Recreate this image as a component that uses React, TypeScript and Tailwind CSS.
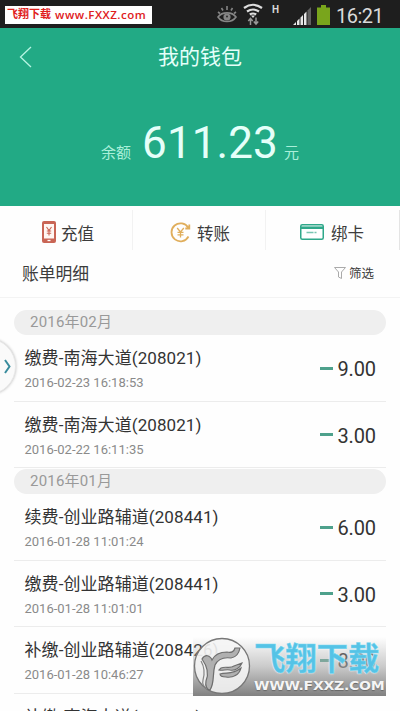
import React from "react";

type Bill = { title: string; time: string; amount: string };

const february: Bill[] = [
  { title: "缴费-南海大道(208021)", time: "2016-02-23 16:18:53", amount: "9.00" },
  { title: "缴费-南海大道(208021)", time: "2016-02-22 16:11:35", amount: "3.00" },
];

const january: Bill[] = [
  { title: "续费-创业路辅道(208441)", time: "2016-01-28 11:01:24", amount: "6.00" },
  { title: "缴费-创业路辅道(208441)", time: "2016-01-28 11:01:01", amount: "3.00" },
  { title: "补缴-创业路辅道(208426)", time: "2016-01-28 10:46:27", amount: "8.00" },
];

const lastTitle = "补缴-南海大道(208026)";

function StatusBar() {
  return (
    <div className="flex h-7 shrink-0 items-center justify-between bg-[#1e1e1e] pl-[5px] pr-[17px]">
      <div className="mt-[2px] flex h-[18px] w-[147px] items-center gap-[4px] bg-white pl-[2px] whitespace-nowrap text-[#e0201c]">
        <span className="text-[11px] leading-[18px] font-bold">飞翔下载</span>
        <span className="font-['Open_Sans'] text-[11.5px] leading-[18px] font-semibold tracking-[0.5px]">www.FXXZ.com</span>
      </div>
      <div className="flex h-7 items-start">
        <svg className="mt-[5px] h-[19px] w-[20px]" viewBox="0 0 20 19" fill="none" stroke="#858585" strokeWidth="1.6">
          <path d="M1 12C5 6.500 15 6.500 19 12C15 18 5 18 1 12Z" />
          <circle cx="10" cy="12" r="2.800" fill="#858585" />
          <path d="M10 1v4M4.500 3l1.500 2.500M15.500 3l-1.500 2.500M1 7l2 1.500M19 7l-2 1.500" />
          <circle cx="10" cy="11.500" r="0.900" fill="#222" stroke="none" />
        </svg>
        <svg className="mt-[3px] ml-[6px] h-[23px] w-[20px]" viewBox="0 0 20 23" fill="none" stroke="#dedede" strokeWidth="2.200">
          <path d="M1 5Q10 -1.500 19 5M4 8.500Q10 4.500 16 8.500M6.800 11.500Q10 9.500 13.200 11.500" />
          <path d="M8 12.500h4l-2 2.500z" fill="#dedede" stroke="none" />
          <path d="M7.500 22v-6M5.300 18L7.500 15.500L9.700 18M13 14.500v6M10.800 18.500L13 21L15.200 18.500" stroke="#999" strokeWidth="1.500" />
        </svg>
        <span className="mt-[3px] ml-[9px] w-[8px] text-[10px] leading-[13px] font-bold text-[#d8d8d8]">H</span>
        <svg className="mt-[6px] ml-[13px] h-[19px] w-[18px]" viewBox="0 0 18 19">
          <path d="M0 19L3 16V19Z M4 15L6.500 12.500V19H4Z M7.500 11.500L10 9V19H7.500Z M11 8L13.500 5.500V19H11Z" fill="#e6e6e6" />
          <path d="M14.500 4.500L18 1V19H14.500Z" fill="#606060" />
        </svg>
        <svg className="mt-[5px] ml-[6px] h-[20px] w-[13px]" viewBox="0 0 13 20">
          <path d="M4 0h5v2.500h4V20H0V2.500h4Z" fill="#79a51c" />
        </svg>
        <span className="mt-[4px] ml-[6px] w-[47px] text-[20px] leading-[24px] tracking-[-0.5px] whitespace-nowrap text-[#dadada]">16:21</span>
      </div>
    </div>
  );
}

function PhoneIcon() {
  return (
    <svg className="h-[22px] w-[14px]" viewBox="0 0 14 22">
      <rect width="14" height="22" rx="2" fill="#c96555" />
      <rect x="2" y="3" width="10" height="14.500" fill="#fff6f2" />
      <path d="M4.500 6L7 9.500L9.500 6M7 9.500V14.500M4.800 10h4.400M4.800 12.200h4.400" fill="none" stroke="#c96555" strokeWidth="1.100" />
      <path d="M5.500 19.500h3" stroke="#fff" strokeWidth="1.300" />
    </svg>
  );
}

function TransferIcon() {
  return (
    <svg className="h-[21px] w-[21px]" viewBox="0 0 21 21" fill="none" stroke="#e0ae5c" strokeWidth="1.800">
      <path d="M18.300 5.800A9 9 0 1 0 18.500 14.500M19.300 2.500V6.500H15.300" />
      <path d="M7.200 6L10.500 10L13.800 6M10.500 10V15.500M7.500 10.300h6M7.500 12.800h6" strokeWidth="1.300" />
    </svg>
  );
}

function CardIcon() {
  return (
    <svg className="h-[16px] w-[24px]" viewBox="0 0 24 16">
      <rect x="0.750" y="0.750" width="22.500" height="14.500" rx="1.500" fill="#fff" stroke="#2fa88a" strokeWidth="1.500" />
      <path d="M1 3.700h22" stroke="#2fa88a" strokeWidth="2.600" />
      <path d="M6.500 8.500h11" stroke="#79c5b2" strokeWidth="1.300" strokeDasharray="7 1 2 1" />
    </svg>
  );
}

function MonthPill({ children }: { children: React.ReactNode }) {
  return (
    <div className="h-[25px] rounded-full bg-[#efefef] pl-[16px] text-[15px] leading-[25px] tracking-[0.2px] text-[#999]">
      {children}
    </div>
  );
}

function BillRow({ bill }: { bill: Bill }) {
  return (
    <div className="flex h-[66.500px] shrink-0 items-start justify-between border-b border-[#ececec] pr-[10px] pl-[10.500px] whitespace-nowrap">
      <div className="pt-[12px]">
        <div className="text-[17px] leading-[22px] tracking-[0.080px] text-[#333]">{bill.title}</div>
        <div className="mt-[6px] text-[13px] leading-[16px] text-[#8a8a8a]">{bill.time}</div>
      </div>
      <div className="flex items-center pt-[22px]">
        <span className="mr-[4px] mb-[2px] h-[3px] w-[13px] bg-[#4ea18c]" />
        <span className="text-[20px] leading-[24px] tracking-[-0.1px] text-[#333]">{bill.amount}</span>
      </div>
    </div>
  );
}

function Watermark() {
  return (
    <div className="absolute top-[637px] left-[193px] flex h-[59px] w-[193px] bg-linear-to-b from-[#d0d0d000] via-[#acacaca0] to-[#7c7c7cf5]">
      <svg className="h-[59px] w-[58px] shrink-0" viewBox="0 0 58 59">
        <circle cx="29" cy="29" r="27.500" fill="#f5f5f5" fillOpacity="0.880" stroke="#777" strokeWidth="1.300" />
        <path d="M9 22C12 17 17 18 19 23C22 17 27 15 34 15C38 16 41 15 42 11L47 11C46 16 44 20 38 21C31 20 25 22 22 28C19 38 22 45 17 53C14 53 12 49 13 44C16 37 14 29 9 22Z" fill="#b0b0b0" stroke="#6e6e6e" strokeWidth="1.200" />
        <path d="M8 24C12 31 12 36 10 43C9 47 11 50 14 52" fill="none" stroke="#858585" strokeWidth="1.200" />
        <path d="M28 31C33 29 37 32 41 29L49 26C47 31 42 34 37 33C33 32 30 34 26 33ZM27 37C34 35 39 38 48 31C46 38 40 41 33 40C29 40 27 39 27 37Z" fill="#b0b0b0" stroke="#6e6e6e" strokeWidth="1.100" />
      </svg>
      <div className="flex w-[134px] flex-col pl-[3px] whitespace-nowrap">
        <div className="mt-[4px] h-[37px] text-[31.500px] leading-[37px] font-bold tracking-[-0.2px] text-[#55c3e6] [-webkit-text-stroke:0.5px_#7ad6ef] [text-shadow:0_0_1px_#fff,0_0_2px_#fff]">飞翔下载</div>
        <div className="h-[16px] origin-left scale-x-[1.080] font-['DejaVu_Sans'] text-[13px] leading-[16px] font-bold tracking-[-0.25px] text-[#f5f5f5] [text-shadow:0_1px_1px_#666]">WWW.FXXZ.COM</div>
      </div>
    </div>
  );
}

export default function App() {
  return (
    <div className="relative flex h-[711px] w-[400px] flex-col overflow-hidden bg-[#fefefe] font-[Roboto,'Noto_Sans_CJK_SC',sans-serif]">
      <StatusBar />
      <header className="h-[178px] shrink-0 bg-[#22aa85] text-[#e5fff9]">
        <div className="grid h-[57px] grid-cols-[40px_1fr_40px] items-center">
          <svg className="ml-[19px] h-[22px] w-[14px]" viewBox="0 0 14 22" fill="none" stroke="#b7f5e3" strokeWidth="1.300">
            <path d="M12 1L1.500 11L12 21" />
          </svg>
          <h1 className="text-center text-[21px] leading-[30px]">我的钱包</h1>
        </div>
        <div className="flex items-baseline justify-center pt-[32px] whitespace-nowrap">
          <span className="text-[15px] text-[#a9efd9]">余额</span>
          <span className="mr-[6px] ml-[11px] text-[44px] leading-[52px] tracking-[0.100px]">611.23</span>
          <span className="text-[15px] text-[#a9efd9]">元</span>
        </div>
      </header>
      <nav className="mt-[4px] flex h-[40px] shrink-0 text-[16.500px] text-[#3c3c3c]">
        <button className="flex w-[133px] items-center gap-[5px] border-r border-[#f2f2f2] pt-[4px] pl-[42px]">
          <PhoneIcon /><span className="pt-[6px]">充值</span>
        </button>
        <button className="flex w-[133px] items-center gap-[6px] border-r border-[#f2f2f2] pt-[4px] pl-[37px]">
          <TransferIcon /><span className="pt-[6px]">转账</span>
        </button>
        <button className="flex w-[134px] items-center gap-[7px] border-r border-[#e4e4e4] pt-[4px] pl-[34px]">
          <CardIcon /><span className="pt-[6px]">绑卡</span>
        </button>
      </nav>
      <div className="flex h-[48px] shrink-0 items-center justify-between border-b border-[#f3f3f3] pr-[26px] pl-[22px] text-[#3c3c3c]">
        <h2 className="pt-[2px] text-[16.800px]">账单明细</h2>
        <div className="flex items-center gap-[3px] pt-[2px] text-[12.500px]">
          <svg className="mb-[3px] h-[12px] w-[12px]" viewBox="0 0 12 12" fill="none" stroke="#aaa" strokeWidth="1">
            <path d="M0.500 0.500h11L7.500 5v6.500L4.500 10V5Z" />
          </svg>
          <span>筛选</span>
        </div>
      </div>
      <main className="mx-[14px] pt-[12px]">
        <MonthPill>2016年02月</MonthPill>
        {february.map((bill) => <BillRow key={bill.time} bill={bill} />)}
        <div className="mt-px"><MonthPill>2016年01月</MonthPill></div>
        {january.map((bill) => <BillRow key={bill.time} bill={bill} />)}
        <div className="pt-[12px] pl-[10.500px] text-[17px] leading-[22px] tracking-[0.080px] text-[#333]">{lastTitle}</div>
      </main>
      <div className="absolute top-[338px] left-[-41px] flex h-[57px] w-[57px] items-center justify-end rounded-full border border-[#e9e9e9] bg-[#fafafa] pr-[4px] shadow-[0_0_3px_#bbb]">
        <svg className="h-[15px] w-[7px]" viewBox="0 0 7 15" fill="none" stroke="#398c9d" strokeWidth="2">
          <path d="M1 1L5.500 7.500L1 14" />
        </svg>
      </div>
      <Watermark />
    </div>
  );
}
